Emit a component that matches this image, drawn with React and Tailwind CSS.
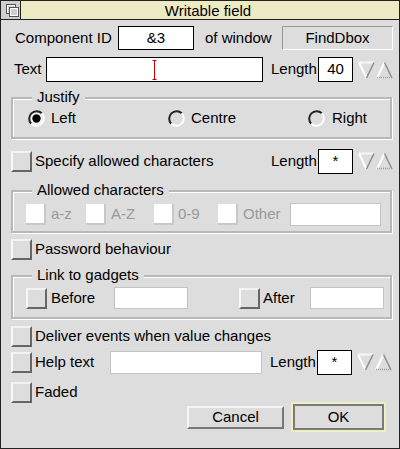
import React from "react";

const Checkbox = ({ faded }) =>
  faded ? (
    <div className="w-[20px] h-[21px] shrink-0 bg-white border-r-2 border-b-2 border-r-[#c8c8c8] border-b-[#c8c8c8]" />
  ) : (
    <div className="w-[21px] h-[21px] shrink-0 border-2 border-t-[#f2f2f2] border-l-[#f8f8f8] border-r-[#666] border-b-[#666]" />
  );

const Radio = ({ on }) => (
  <svg width="17" height="17" viewBox="0 0 17 17" className="shrink-0">
    <path d="M3.2 13.8 A7.5 7.5 0 0 1 13.8 3.2" stroke="#222" strokeWidth="2" fill="none" />
    <path d="M13.8 3.2 A7.5 7.5 0 0 1 3.2 13.8" stroke="#fff" strokeWidth="2" fill="none" />
    {on && (
      <>
        <circle cx="8.5" cy="8.5" r="5.6" fill="#fff" />
        <circle cx="8.5" cy="8.5" r="4.2" fill="#000" />
      </>
    )}
  </svg>
);

// adjuster arrows (down / up)
const Arrows = () => (
  <svg width="35" height="18" viewBox="0 0 35 18" className="shrink-0 ml-[5px]">
    <line x1="1" y1="1.5" x2="16" y2="1.5" stroke="#f6f6f6" strokeWidth="2" />
    <line x1="1" y1="1.5" x2="8.5" y2="17" stroke="#fff" strokeWidth="2" />
    <line x1="16" y1="1.5" x2="8.5" y2="17" stroke="#8c8c8c" strokeWidth="1.5" />
    <line x1="19" y1="17" x2="26.5" y2="1.5" stroke="#fff" strokeWidth="2" />
    <line x1="34" y1="17" x2="26.5" y2="1.5" stroke="#8c8c8c" strokeWidth="1.5" />
    <line x1="19" y1="16.5" x2="34" y2="16.5" stroke="#9a9a9a" strokeWidth="1.5" strokeDasharray="1 1" />
  </svg>
);

const Group = ({ label, className, children }) => (
  <div
    className={
      "relative ml-[10px] w-[381px] border-2 border-[#b8b8b8] shadow-[inset_1px_1px_0_#fff,1px_1px_0_#fff] " +
      className
    }
  >
    <span className="absolute left-[19px] -top-[11px] px-[5px] bg-[#dddddd] leading-[18px]">
      {label}
    </span>
    {children}
  </div>
);

const LengthField = ({ value }) => (
  <>
    <span className="w-[47px] shrink-0">Length</span>
    <div className="w-[35px] h-[25px] shrink-0 border border-black bg-white flex items-center justify-center">
      {value}
    </div>
    <Arrows />
  </>
);

export default function App() {
  return (
    <div className="w-[400px] h-[449px] bg-[#dddddd] border border-[#222] flex flex-col font-['Liberation_Sans',Arial,sans-serif] text-[15px] text-black overflow-hidden">
      {/* title bar */}
      <div className="h-[19px] shrink-0 flex border-b border-[#222]">
        <div className="w-[20px] h-full bg-[#cfcfcf] border-r border-[#222] flex items-center justify-center">
          <svg width="18" height="18" viewBox="0 0 18 18">
            <rect x="4.5" y="3.5" width="9" height="9" fill="#cfcfcf" stroke="#555" />
            <rect x="5.5" y="4.5" width="7" height="7" fill="none" stroke="#fff" />
            <rect x="7.5" y="6.5" width="9" height="9" fill="#cfcfcf" stroke="#555" />
            <rect x="8.5" y="7.5" width="7" height="7" fill="none" stroke="#fff" />
          </svg>
        </div>
        <div className="flex-1 bg-[#ecebc4] flex items-center justify-center leading-none pr-[4px]">
          Writable field
        </div>
      </div>

      {/* component id */}
      <div className="mt-[6px] h-[24px] flex items-center">
        <span className="ml-[14px] w-[103px]">Component ID</span>
        <div className="w-[76px] h-[24px] border border-black bg-white flex items-center justify-center">
          &amp;3
        </div>
        <span className="ml-[11px] w-[77px]">of window</span>
        <div className="w-[111px] h-[24px] border border-t-[#999] border-l-[#999] border-r-white border-b-white flex items-center justify-center">
          FindDbox
        </div>
      </div>

      {/* text */}
      <div className="mt-[7px] h-[25px] flex items-center">
        <span className="ml-[13px] w-[32px]">Text</span>
        <div className="w-[217px] h-[25px] border border-black bg-white flex items-center pl-[105px]">
          <svg width="5" height="20" viewBox="0 0 5 20">
            <line x1="2.5" y1="0" x2="2.5" y2="20" stroke="#c00" strokeWidth="1" />
            <line x1="0.5" y1="0.5" x2="4.5" y2="0.5" stroke="#c00" strokeWidth="1" />
            <line x1="0.5" y1="19.5" x2="4.5" y2="19.5" stroke="#c00" strokeWidth="1" />
          </svg>
        </div>
        <span className="ml-[8px]" />
        <LengthField value="40" />
      </div>

      {/* justify */}
      <Group label="Justify" className="mt-[15px] h-[42px]">
        <div className="pt-[8px] flex items-center">
          <div className="ml-[15px] w-[140px] flex items-center gap-[6px]">
            <Radio on />
            <span>Left</span>
          </div>
          <div className="w-[140px] flex items-center gap-[6px]">
            <Radio />
            <span>Centre</span>
          </div>
          <div className="flex items-center gap-[7px]">
            <Radio />
            <span>Right</span>
          </div>
        </div>
      </Group>

      {/* specify allowed characters */}
      <div className="mt-[9px] ml-[10px] w-[382px] h-[26px] flex items-center">
        <Checkbox />
        <span className="ml-[3px] flex-1">Specify allowed characters</span>
        <LengthField value="*" />
      </div>

      {/* allowed characters */}
      <Group label="Allowed characters" className="mt-[16px] h-[43px]">
        <div className="pt-[10px] h-[34px] flex items-center text-[#999]">
          <div className="ml-[13px] w-[60px] flex items-center gap-[5px]">
            <Checkbox faded />
            <span>a-z</span>
          </div>
          <div className="w-[68px] flex items-center gap-[5px]">
            <Checkbox faded />
            <span>A-Z</span>
          </div>
          <div className="w-[64px] flex items-center gap-[4px]">
            <Checkbox faded />
            <span>0-9</span>
          </div>
          <div className="w-[72px] flex items-center gap-[5px]">
            <Checkbox faded />
            <span>Other</span>
          </div>
          <div className="w-[91px] h-[23px] bg-white border border-[#c4c4c4]" />
        </div>
      </Group>

      {/* password */}
      <div className="mt-[6px] ml-[10px] h-[21px] flex items-center">
        <Checkbox />
        <span className="ml-[3px]">Password behaviour</span>
      </div>

      {/* link to gadgets */}
      <Group label="Link to gadgets" className="mt-[15px] h-[44px]">
        <div className="pt-[10px] h-[32px] flex items-center">
          <div className="ml-[13px] w-[88px] flex items-center gap-[4px]">
            <Checkbox />
            <span>Before</span>
          </div>
          <div className="w-[74px] h-[22px] bg-white border border-[#c4c4c4]" />
          <div className="ml-[51px] w-[71px] flex items-center gap-[3px]">
            <Checkbox />
            <span>After</span>
          </div>
          <div className="w-[74px] h-[22px] bg-white border border-[#c4c4c4]" />
        </div>
      </Group>

      {/* deliver events */}
      <div className="mt-[7px] ml-[10px] h-[21px] flex items-center">
        <Checkbox />
        <span className="ml-[3px]">Deliver events when value changes</span>
      </div>

      {/* help text */}
      <div className="mt-[3px] ml-[10px] w-[382px] h-[24px] flex items-center">
        <Checkbox />
        <span className="ml-[3px] w-[75px]">Help text</span>
        <div className="w-[152px] h-[23px] bg-white border border-[#c4c4c4]" />
        <span className="ml-[8px]" />
        <LengthField value="*" />
      </div>

      {/* faded */}
      <div className="mt-[8px] ml-[10px] h-[21px] flex items-center">
        <Checkbox />
        <span className="ml-[3px]">Faded</span>
      </div>

      {/* buttons */}
      <div className="-mt-px h-[30px] flex items-center justify-end pr-[13px] gap-[7px]">
        <div className="w-[97px] h-[23px] border-2 border-t-[#f4f4f4] border-l-[#f4f4f4] border-r-[#777] border-b-[#777] flex items-center justify-center">
          Cancel
        </div>
        <div className="w-[95px] h-[30px] border-2 border-[#eeeebf]">
          <div className="w-full h-full border-2 border-[#7a7a7a] flex items-center justify-center">
            OK
          </div>
        </div>
      </div>
    </div>
  );
}
